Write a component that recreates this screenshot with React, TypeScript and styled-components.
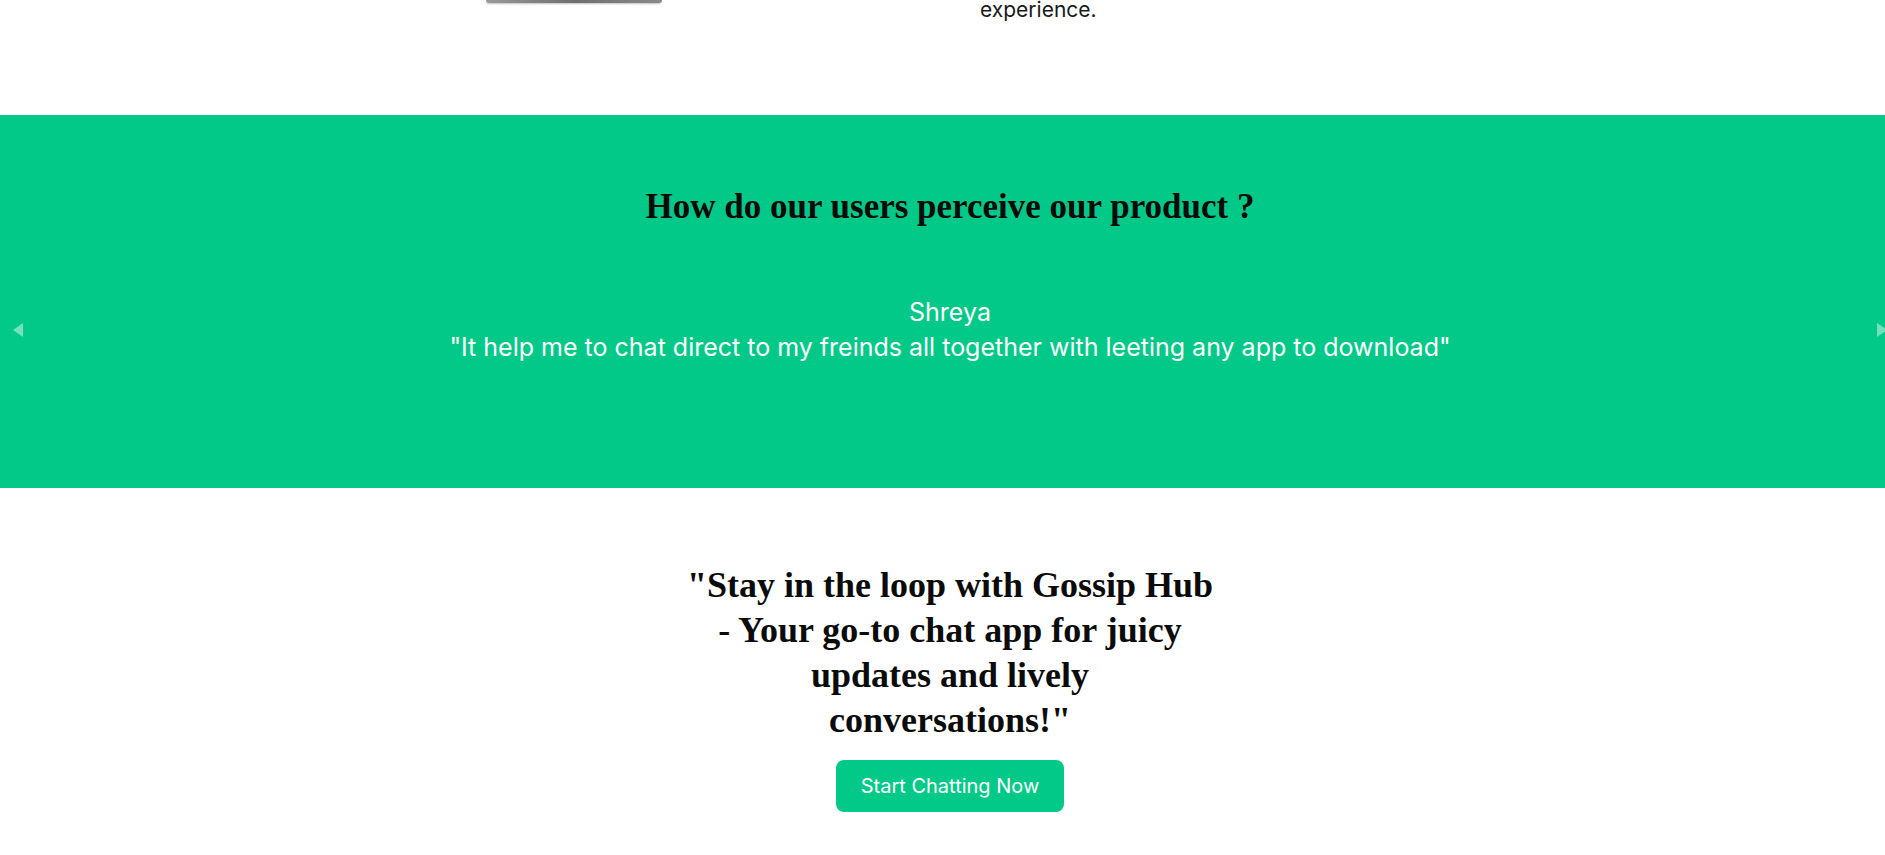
import React from "react";
import styled, { createGlobalStyle } from "styled-components";

const Global = createGlobalStyle`
  html, body { margin: 0; padding: 0; overflow-x: hidden; background: #ffffff; }
  body { font-family: Inter, "Noto Sans", sans-serif; color: #111; }
`;

const Page = styled.div`
  width: 1900px;
`;

const TopSection = styled.section`
  height: 115px;
  overflow: hidden;
  display: flex;
  align-items: flex-start;
`;

const ImageEdge = styled.div`
  margin-left: 486px;
  width: 176px;
  height: 3px;
  border-radius: 0 0 6px 6px;
  background: linear-gradient(90deg, #9a9a9a, #6f6f6f 50%, #8a8a8a);
  box-shadow: 0 1px 2px rgba(0, 0, 0, 0.25);
`;

const TopText = styled.p`
  margin: -4px 0 0 318px;
  font-size: 21px;
  line-height: 28px;
  color: #1a1a1a;
`;

const Band = styled.section`
  position: relative;
  height: 373px;
  background: #02c988;
  display: flex;
  flex-direction: column;
  align-items: center;
  padding-top: 72px;
  box-sizing: border-box;
`;

const BandTitle = styled.h2`
  margin: 0;
  font-family: "Liberation Serif", "DejaVu Serif", serif;
  font-weight: 700;
  font-size: 35px;
  line-height: 40px;
  color: #0b0b0b;
`;

const Slide = styled.div`
  margin-top: 68px;
  display: flex;
  flex-direction: column;
  align-items: center;
  color: #ffffff;
  font-size: 25px;
  line-height: 35px;
`;

const Arrow = styled.button<{ $side: "left" | "right" }>`
  position: absolute;
  top: 208px;
  ${(p) => (p.$side === "left" ? "left: 13px;" : "right: 13px;")}
  width: 10px;
  height: 14px;
  padding: 0;
  border: 0;
  background: transparent;
  cursor: pointer;
  display: block;
`;

const CtaSection = styled.section`
  display: flex;
  flex-direction: column;
  align-items: center;
  padding-top: 75px;
  padding-bottom: 40px;
`;

const CtaTitle = styled.h1`
  margin: 0;
  font-family: "Liberation Serif", "DejaVu Serif", serif;
  font-weight: 700;
  font-size: 36px;
  line-height: 45px;
  text-align: center;
  color: #0b0b0b;
`;

const CtaButton = styled.button`
  margin-top: 17px;
  width: 228px;
  height: 52px;
  border: 0;
  border-radius: 8px;
  background: #02c988;
  color: #ffffff;
  font-family: Inter, "Noto Sans", sans-serif;
  font-size: 20px;
  cursor: pointer;
`;

const Tri = ({ dir }: { dir: "left" | "right" }) => (
  <svg width="10" height="14" viewBox="0 0 10 14">
    {dir === "left" ? (
      <polygon points="10,0 10,14 0,7" fill="rgba(255,255,255,0.45)" />
    ) : (
      <polygon points="0,0 0,14 10,7" fill="rgba(255,255,255,0.45)" />
    )}
  </svg>
);

export default function App() {
  return (
    <Page>
      <Global />
      <TopSection>
        <ImageEdge />
        <TopText>experience.</TopText>
      </TopSection>
      <Band>
        <BandTitle>How do our users perceive our product ?</BandTitle>
        <Slide>
          <div>Shreya</div>
          <div>"It help me to chat direct to my freinds all together with leeting any app to download"</div>
        </Slide>
        <Arrow $side="left" aria-label="Previous">
          <Tri dir="left" />
        </Arrow>
        <Arrow $side="right" aria-label="Next">
          <Tri dir="right" />
        </Arrow>
      </Band>
      <CtaSection>
        <CtaTitle>
          "Stay in the loop with Gossip Hub
          <br />- Your go-to chat app for juicy
          <br />updates and lively
          <br />conversations!"
        </CtaTitle>
        <CtaButton>Start Chatting Now</CtaButton>
      </CtaSection>
    </Page>
  );
}
